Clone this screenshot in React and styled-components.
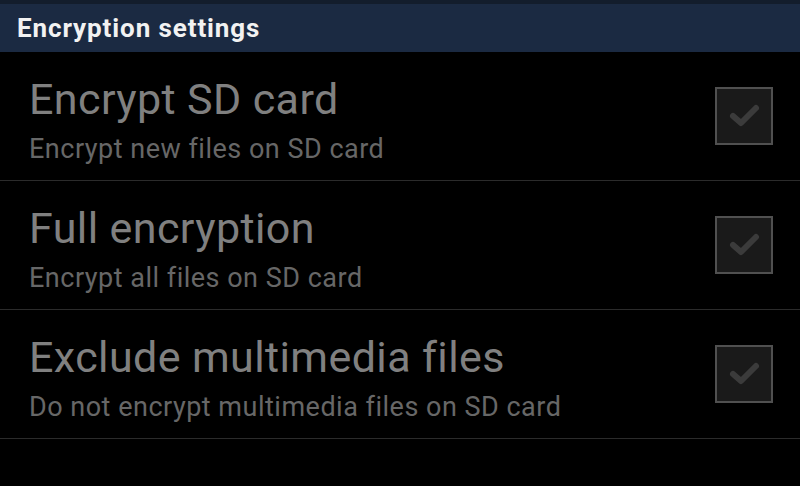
import React from 'react';
import styled, { createGlobalStyle } from 'styled-components';

const Global = createGlobalStyle`
  html, body {
    margin: 0;
    padding: 0;
    background: #000;
  }
  body {
    font-family: Roboto, "Noto Sans", sans-serif;
  }
`;

const Screen = styled.div`
  width: 800px;
  height: 486px;
  background: #000;
  overflow: hidden;
`;

const Header = styled.div`
  height: 48px;
  border-top: 4px solid #131d2c;
  background: #1b2a42;
  display: flex;
  align-items: center;
  padding-left: 17px;
  color: #f2f2f2;
  font-size: 26px;
  font-weight: bold;
  letter-spacing: 0.9px;
`;

const Row = styled.div`
  height: 128px;
  border-bottom: 1px solid #2b2b2b;
  display: flex;
  align-items: flex-start;
  padding: 0 27px 0 29px;
`;

const Texts = styled.div`
  flex: 1;
  display: flex;
  flex-direction: column;
  padding-top: 23px;
`;

const Title = styled.div`
  color: #808080;
  font-size: 43px;
  line-height: 48px;
  letter-spacing: 0.4px;
`;

const Summary = styled.div`
  color: #676767;
  font-size: 27px;
  line-height: 34px;
  margin-top: 9px;
  letter-spacing: 0.5px;
`;

const Box = styled.div`
  align-self: center;
  width: 54px;
  height: 54px;
  border: 2px solid #505050;
  background: #1a1a1a;
  display: flex;
  align-items: center;
  justify-content: center;
`;

const Check = () => (
  <svg width="38" height="38" viewBox="0 0 38 38">
    <path d="M8 19 L16 26 L31 11" fill="none" stroke="#3b3b3b" strokeWidth="6" strokeLinecap="round" strokeLinejoin="round" />
  </svg>
);

const items = [
  { title: 'Encrypt SD card', summary: 'Encrypt new files on SD card' },
  { title: 'Full encryption', summary: 'Encrypt all files on SD card' },
  { title: 'Exclude multimedia files', summary: 'Do not encrypt multimedia files on SD card' },
];

const App = () => {
  return (
    <Screen>
      <Global />
      <Header>Encryption settings</Header>
      {items.map((it) => (
        <Row key={it.title}>
          <Texts>
            <Title>{it.title}</Title>
            <Summary>{it.summary}</Summary>
          </Texts>
          <Box>
            <Check />
          </Box>
        </Row>
      ))}
    </Screen>
  );
};

export default App;
